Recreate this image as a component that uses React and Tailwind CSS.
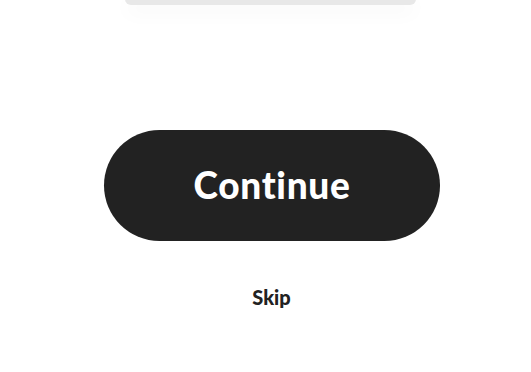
export default function App() {
  return (
    <div className="w-[531px] h-[372px] bg-white overflow-hidden flex flex-col items-center font-['Lato',sans-serif]">
      <div className="w-[291px] h-[6px] shrink-0 -mt-px ml-[10px] bg-[#e8e8e8] rounded-b-[14px] shadow-[0_6px_20px_rgba(0,0,0,0.06)]" />
      <button className="mt-[125px] ml-[13px] w-[336px] h-[111px] shrink-0 rounded-full bg-[#222222] text-white text-[37px] font-black tracking-[0.7px] pb-[2px]">
        Continue
      </button>
      <button className="mt-[41px] ml-[12px] text-[#222222] text-[20px] font-black">
        Skip
      </button>
    </div>
  );
}
